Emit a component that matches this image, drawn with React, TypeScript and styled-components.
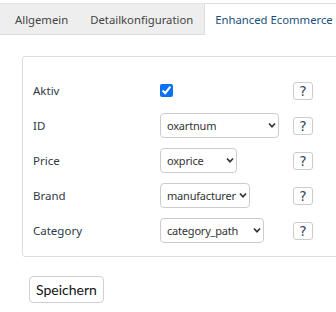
import React from 'react';
import styled, { createGlobalStyle } from 'styled-components';

const GlobalStyle = createGlobalStyle`
  body {
    margin: 0;
    background: #fff;
    overflow: hidden;
    font-family: "Noto Sans", "DejaVu Sans", sans-serif;
  }
`;

const Page = styled.div`
  width: 336px;
  height: 312px;
  padding-top: 3px;
  box-sizing: border-box;
  overflow: hidden;
`;

const TabBar = styled.div`
  display: flex;
  height: 32px;
  padding-left: 4px;
  background: #eeeeee;
  border-top: 1px solid #e4e4e4;
  border-bottom: 1px solid #dddddd;
  box-sizing: border-box;
`;

const Tab = styled.div<{ $active?: boolean }>`
  display: flex;
  align-items: center;
  padding: 0 10px;
  margin-top: -1px;
  margin-bottom: -1px;
  font-size: 11.3px;
  color: ${(p) => (p.$active ? '#1d4f7c' : '#444')};
  background: ${(p) => (p.$active ? '#fff' : 'transparent')};
  border: 1px solid ${(p) => (p.$active ? '#dddddd' : 'transparent')};
  border-bottom: none;
  white-space: nowrap;
`;

const Fieldset = styled.div`
  margin: 21px 0 0 22px;
  width: 360px;
  height: 201px;
  box-sizing: border-box;
  border: 1px solid #dddddd;
  border-radius: 3px;
  padding: 16px 0 0 10px;
`;

const Grid = styled.div`
  display: grid;
  grid-template-columns: 127px 133px 30px;
  grid-auto-rows: 35px;
  align-items: center;
`;

const Label = styled.div`
  font-size: 11.5px;
  color: #2f3a48;
`;

const Check = styled.input`
  margin: 0;
  width: 13px;
  height: 13px;
  accent-color: #0a72f0;
`;

const SelectWrap = styled.div<{ $w: number }>`
  position: relative;
  width: ${(p) => p.$w}px;
  height: 25px;
`;

const Select = styled.select`
  appearance: none;
  width: 100%;
  height: 100%;
  box-sizing: border-box;
  border: 1px solid #cccccc;
  border-radius: 4px;
  background: #fff;
  padding: 0 0 0 6px;
  font-family: "Noto Sans", "DejaVu Sans", sans-serif;
  font-size: 11px;
  letter-spacing: -0.2px;
  color: #333;
`;

const Chevron = styled.svg`
  position: absolute;
  right: 3px;
  top: 50%;
  margin-top: -4px;
  width: 8px;
  height: 7px;
  pointer-events: none;
`;

const Help = styled.button`
  width: 20px;
  height: 18px;
  padding: 0;
  border: 1px solid #cccccc;
  border-radius: 3px;
  background: #fff;
  font-family: "DejaVu Sans", sans-serif;
  font-size: 14px;
  font-weight: normal;
  color: #34495e;
  line-height: 16px;
`;

const SaveButton = styled.button`
  margin: 19px 0 0 29px;
  height: 27px;
  padding: 0 6px;
  border: 1px solid #d0d0d0;
  border-radius: 4px;
  background: #fff;
  font-family: Lato, sans-serif;
  font-size: 14px;
  color: #111;
`;

const selects = [
  { label: 'ID', value: 'oxartnum', w: 119 },
  { label: 'Price', value: 'oxprice', w: 77 },
  { label: 'Brand', value: 'manufacturer', w: 90 },
  { label: 'Category', value: 'category_path', w: 104 },
];

function Arrow() {
  return (
    <Chevron viewBox="0 0 8 7">
      <path d="M1 1.5 L4 4.8 L7 1.5" fill="none" stroke="#333" strokeWidth="1.7" />
    </Chevron>
  );
}

export default function App() {
  return (
    <Page>
      <GlobalStyle />
      <TabBar>
        <Tab>Allgemein</Tab>
        <Tab>Detailkonfiguration</Tab>
        <Tab $active>Enhanced Ecommerce</Tab>
      </TabBar>
      <Fieldset>
        <Grid>
          <Label>Aktiv</Label>
          <div>
            <Check type="checkbox" defaultChecked />
          </div>
          <Help>?</Help>
          {selects.map((s) => (
            <React.Fragment key={s.label}>
              <Label>{s.label}</Label>
              <SelectWrap $w={s.w}>
                <Select defaultValue={s.value}>
                  <option value={s.value}>{s.value}</option>
                </Select>
                <Arrow />
              </SelectWrap>
              <Help>?</Help>
            </React.Fragment>
          ))}
        </Grid>
      </Fieldset>
      <SaveButton>Speichern</SaveButton>
    </Page>
  );
}
